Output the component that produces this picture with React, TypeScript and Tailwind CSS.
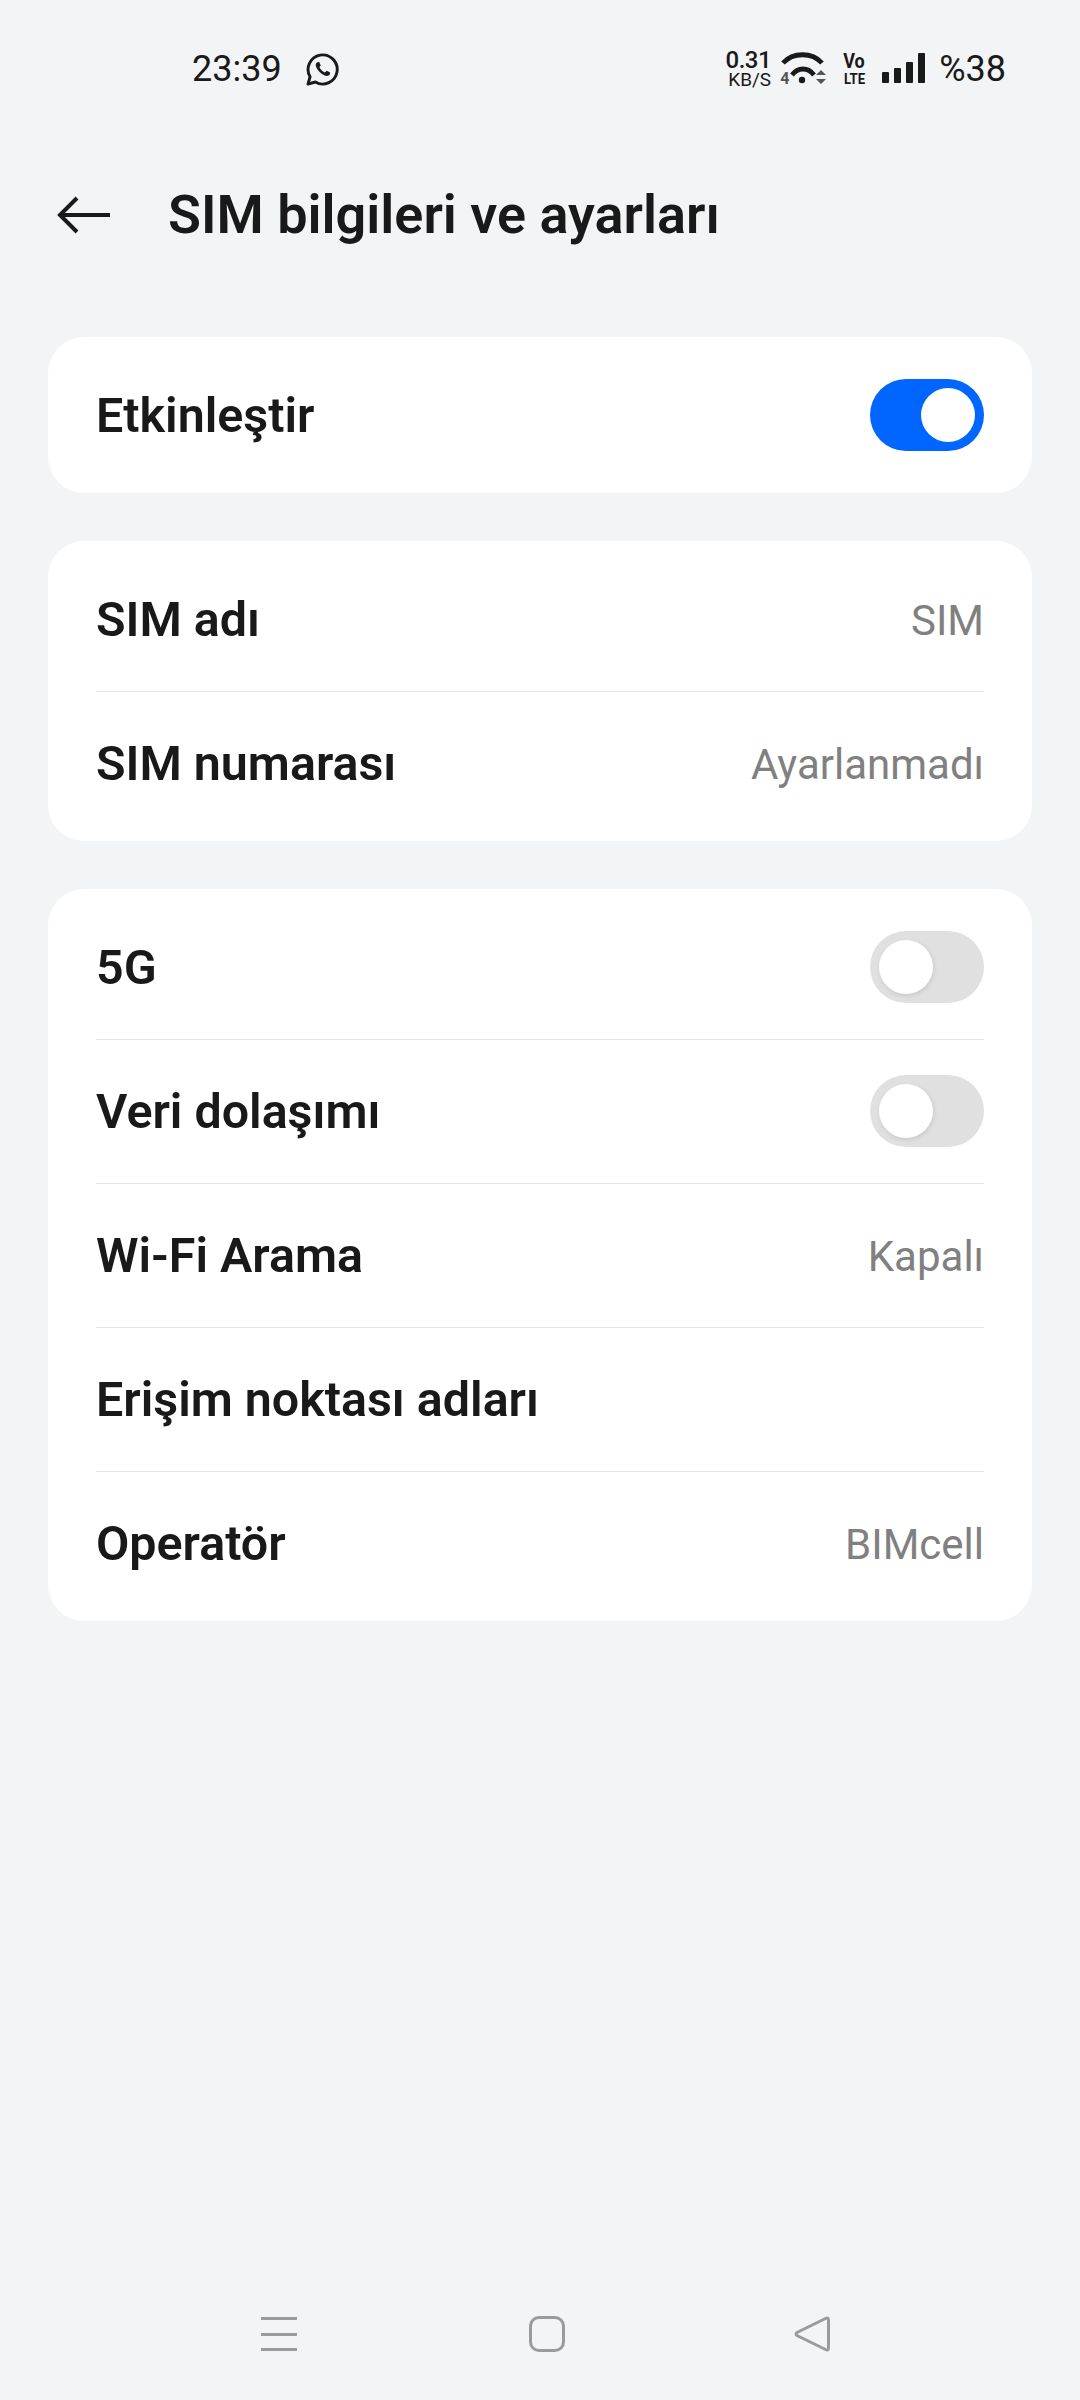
const font = { fontFamily: 'Roboto, sans-serif' };

function Toggle({ on }: { on: boolean }) {
  return (
    <div className={`flex h-[72px] w-[114px] items-center rounded-full p-[9px] ${on ? 'justify-end bg-[#0066ff]' : 'justify-start bg-[#e0e0e0]'}`}>
      <div className={`h-[54px] w-[54px] rounded-full bg-white ${on ? '' : 'shadow-[1px_2px_5px_rgba(0,0,0,0.10)]'}`} />
    </div>
  );
}

function Row({ label, value, toggle }: { label: string; value?: string; toggle?: boolean }) {
  return (
    <div className="flex h-[144px] items-center justify-between">
      <span className="pt-[3px] text-[48.4px] font-[650] leading-none text-[#191919]">{label}</span>
      {value !== undefined && <span className="pt-[3px] text-[42px] leading-none text-[#808080]">{value}</span>}
      {toggle !== undefined && <Toggle on={toggle} />}
    </div>
  );
}

function Divider() {
  return <div className="-mb-px h-px bg-[#e3e3e3]" />;
}

function Card({ children }: { children: React.ReactNode }) {
  return <div className="rounded-[36px] bg-white px-[48px] py-[6px]">{children}</div>;
}

function WhatsApp() {
  return (
    <svg width="33" height="33" viewBox="1 1 34 34" fill="none" stroke="#1a1a1a" className="block">
      <path d="M3 33 L5.2 25.5 A15 15 0 1 1 10.6 30.9 Z" strokeWidth="3" strokeLinejoin="round" />
      <path d="M12.5 10.5 C11 11.5 10.6 13.5 11.6 15.8 C13 19.3 16.5 22.8 20.2 24.3 C22.6 25.2 24.8 24.6 25.6 23 L25.9 21.2 L22.3 19.4 L20.4 21 C18 20 15.8 17.8 14.8 15.5 L16.2 13.8 L14.6 10.2 Z" fill="#1a1a1a" stroke="none" />
    </svg>
  );
}

function Wifi() {
  return (
    <svg width="48" height="36" viewBox="0 0 48 36" fill="none" className="block">
      <path d="M3 12 C13 1 32 1 42 12" stroke="#1a1a1a" strokeWidth="4.8" />
      <path d="M12 24 C18 16 28 16 34 24" stroke="#1a1a1a" strokeWidth="4.8" />
      <circle cx="22" cy="29" r="3.2" fill="#1a1a1a" />
      <path d="M36 24 L41 19 L46 24 Z M36 28 L46 28 L41 33 Z" fill="#555" />
    </svg>
  );
}

function Signal() {
  return (
    <div className="mb-[2px] flex h-[30px] items-end gap-[5px]">
      <div className="h-[11px] w-[7px] rounded-[1px] bg-[#1a1a1a]" />
      <div className="h-[15px] w-[7px] rounded-[1px] bg-[#1a1a1a]" />
      <div className="h-[21px] w-[7px] rounded-[1px] bg-[#1a1a1a]" />
      <div className="h-[30px] w-[7px] rounded-[1px] bg-[#1a1a1a]" />
    </div>
  );
}

export default function App() {
  return (
    <div className="flex h-[2400px] w-[1080px] flex-col bg-[#f3f4f6] text-[#191919]" style={font}>
      <div className="flex h-[138px] items-center justify-between pl-[192px] pr-[74px]">
        <div className="flex items-center gap-[24px]">
          <span className="text-[36px] leading-none text-[#1a1a1a]">23:39</span>
          <WhatsApp />
        </div>
        <div className="flex items-center">
          <div className="flex w-[46px] flex-col items-end leading-none text-[#1a1a1a]">
            <span className="text-[24px] font-medium leading-[21px] tracking-[-0.5px]">0.31</span>
            <span className="text-[19px] leading-[17px]">KB/S</span>
          </div>
          <div className="relative ml-[9px]">
            <Wifi />
            <span className="absolute bottom-0 left-0 text-[16px] font-bold leading-none text-[#555]">4</span>
          </div>
          <div className="ml-[16px] flex w-[20px] flex-col items-center font-bold leading-none text-[#1a1a1a]">
            <span className="scale-x-[0.9] text-[20px] leading-[19px]">Vo</span>
            <span className="scale-x-[0.85] text-[15.5px] leading-[16px]">LTE</span>
          </div>
          <div className="ml-[18px]"><Signal /></div>
          <span className="ml-[14px] text-[36px] leading-none text-[#1a1a1a]">%38</span>
        </div>
      </div>

      <div className="flex h-[154px] items-center pl-[57px]">
        <svg width="54" height="40" viewBox="0 0 54 40" fill="none" stroke="#1a1a1a" strokeWidth="4" className="block">
          <path d="M53 20 H3 M20 3 L3 20 L20 37" />
        </svg>
        <span className="ml-[57px] text-[54px] font-[650] leading-none">SIM bilgileri ve ayarları</span>
      </div>

      <div className="mt-[45px] flex flex-col gap-[48px] px-[48px]">
        <Card><Row label="Etkinleştir" toggle={true} /></Card>
        <Card>
          <Row label="SIM adı" value="SIM" />
          <Divider />
          <Row label="SIM numarası" value="Ayarlanmadı" />
        </Card>
        <Card>
          <Row label="5G" toggle={false} />
          <Divider />
          <Row label="Veri dolaşımı" toggle={false} />
          <Divider />
          <Row label="Wi-Fi Arama" value="Kapalı" />
          <Divider />
          <Row label="Erişim noktası adları" />
          <Divider />
          <Row label="Operatör" value="BIMcell" />
        </Card>
      </div>

      <div className="mt-auto flex items-center pb-[48px] pl-[261px]">
        <div className="flex h-[36px] w-[36px] flex-col justify-between py-[1px]">
          <div className="h-[3px] bg-[#9b9b9b]" />
          <div className="h-[3px] bg-[#9b9b9b]" />
          <div className="h-[3px] bg-[#9b9b9b]" />
        </div>
        <div className="ml-[232px] h-[36px] w-[36px] rounded-[10px] border-[3px] border-[#9b9b9b]" />
        <svg width="36" height="36" viewBox="0 0 36 36" fill="none" stroke="#9b9b9b" strokeWidth="3" className="ml-[229px] block">
          <path d="M34.5 4 V32 Q34.5 35 31.5 33.5 L3 19.5 Q1 18 3 16.5 L31.5 2.5 Q34.5 1 34.5 4 Z" />
        </svg>
      </div>
    </div>
  );
}
